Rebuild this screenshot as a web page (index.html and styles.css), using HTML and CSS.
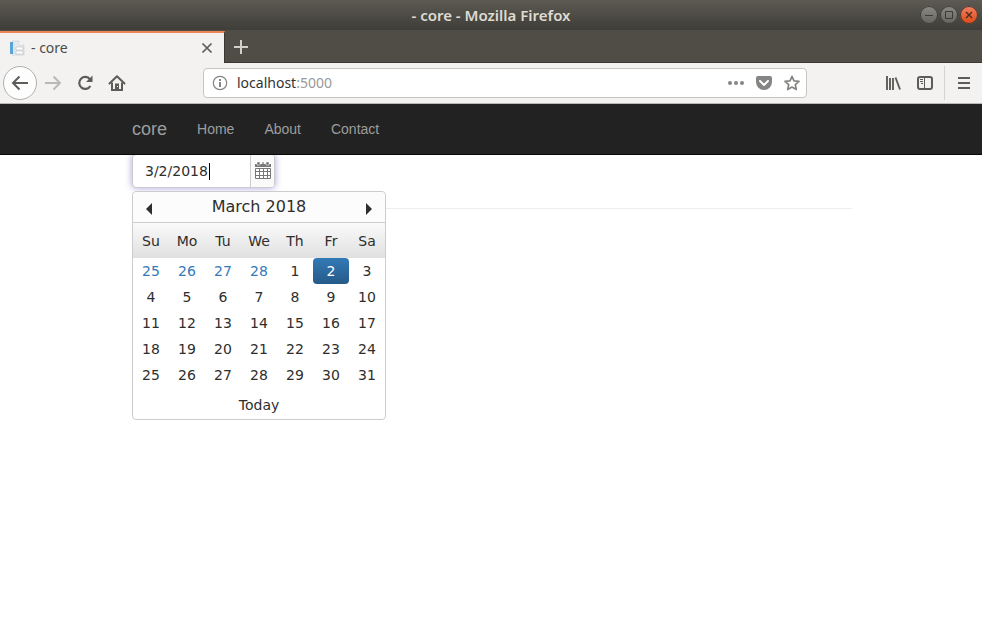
FILE: index.html
```html
<!DOCTYPE html>
<html lang="en">
<head>
<meta charset="utf-8">
<title>- core</title>
<link rel="stylesheet" href="styles.css">
</head>
<body>
<div class="titlebar">
  <h1 class="window-title">- core - Mozilla Firefox</h1>
  <div class="window-buttons">
    <button class="winbtn" aria-label="Minimize"><svg width="18" height="18" viewBox="0 0 18 18"><path d="M5 9.5h8" stroke="#3c3b37" fill="none"/></svg></button>
    <button class="winbtn" aria-label="Maximize"><svg width="18" height="18" viewBox="0 0 18 18"><path d="M5.5 5.5h7v7h-7z" stroke="#3c3b37" fill="none"/></svg></button>
    <button class="winbtn close" aria-label="Close"><svg width="18" height="18" viewBox="0 0 18 18"><path d="M6 6l6 6M12 6l-6 6" stroke="#4a2a1c" stroke-width="1.4" fill="none"/></svg></button>
  </div>
</div>
<div class="tabs">
  <div class="tab">
    <svg class="favicon" width="16" height="16" viewBox="0 0 16 16"><path d="M3 1h7l5 4v10H3z" fill="#e9e9ec" stroke="#c9cbd0" stroke-width=".6"/><path d="M1 2h3v12H1z" fill="#5aa5d2"/><path d="M4 1h2v14H4z" fill="#d8e6ef"/><path d="M10 1v4h5" fill="#fff" stroke="#c9cbd0" stroke-width=".6"/><path d="M7 7h7v3H7zM7 11h7v3H7z" fill="#fff" stroke="#b9bcc5" stroke-width=".6"/></svg>
    <span class="tab-title">- core</span>
    <button class="icon-btn" aria-label="Close tab"><svg width="12" height="12" viewBox="0 0 12 12"><path d="M1.5 1.5l9 9M10.5 1.5l-9 9" stroke="#5c5c59" stroke-width="1.7" fill="none"/></svg></button>
  </div>
  <button class="icon-btn new-tab" aria-label="New tab"><svg width="16" height="16" viewBox="0 0 16 16"><path d="M8 1v14M1 8h14" stroke="#d2cfc9" stroke-width="2" fill="none"/></svg></button>
</div>
<div class="toolbar">
  <div class="nav-tools">
    <button class="icon-btn back" aria-label="Back"><svg width="18" height="18" viewBox="0 0 18 18"><path d="M17 9H2.500M8.500 2.500L2 9l6.500 6.500" stroke="#5c5c59" stroke-width="2" fill="none"/></svg></button>
    <button class="icon-btn" aria-label="Forward"><svg width="18" height="18" viewBox="0 0 18 18"><path d="M1 9h14.500M9.500 2.500L16 9l-6.500 6.500" stroke="#b9b9b7" stroke-width="2" fill="none"/></svg></button>
    <button class="icon-btn" aria-label="Reload"><svg width="18" height="18" viewBox="0 0 18 18"><path d="M14 5.300A6 6 0 1 0 14.400 12" stroke="#5c5c59" stroke-width="2.200" fill="none"/><path d="M16.500 1.500v6.500H10z" fill="#5c5c59"/></svg></button>
    <button class="icon-btn" aria-label="Home"><svg width="18" height="18" viewBox="0 0 18 18"><path d="M1.500 9.500L9 2.300l7.500 7.200" stroke="#5c5c59" stroke-width="2" stroke-linecap="round" stroke-linejoin="round" fill="none"/><path d="M4 8.500V16h10V8.500" stroke="#5c5c59" stroke-width="2" fill="none"/><path d="M7 9.500h4V16H7z" fill="#5c5c59"/><path d="M9 12h1v1H9z" fill="#fff"/></svg></button>
  </div>
  <div class="urlbar">
    <svg width="16" height="16" viewBox="0 0 16 16"><circle cx="8" cy="8" r="6.700" stroke="#858583" stroke-width="1.200" fill="none"/><path d="M7 7h2v5H7zM7 4h2v2H7z" fill="#858583"/></svg>
    <span class="url">localhost<span class="port">:5000</span></span>
    <button class="icon-btn" aria-label="Page actions"><svg width="16" height="16" viewBox="0 0 16 16"><g fill="#858583"><circle cx="2" cy="8" r="2"/><circle cx="8" cy="8" r="2"/><circle cx="14" cy="8" r="2"/></g></svg></button>
    <button class="icon-btn" aria-label="Save to Pocket"><svg width="16" height="16" viewBox="0 0 16 16"><path d="M2 1h12a2 2 0 0 1 2 2v4a8 8 0 0 1-16 0V3a2 2 0 0 1 2-2z" fill="#858583"/><path d="M4 6l4 4 4-4" stroke="#fff" stroke-width="2" stroke-linecap="round" stroke-linejoin="round" fill="none"/></svg></button>
    <button class="icon-btn" aria-label="Bookmark"><svg width="16" height="16" viewBox="0 0 16 16"><path d="M8 1.300l2 4.500 5 .5-3.700 3.300 1 4.900L8 12l-4.300 2.500 1-4.900L1 6.300l5-.5z" stroke="#858583" stroke-width="1.700" stroke-linejoin="round" fill="none"/></svg></button>
  </div>
  <div class="side-tools">
    <button class="icon-btn" aria-label="Library"><svg width="16" height="16" viewBox="0 0 16 16"><path d="M2 1v14M5 3v12M8 3v12M10.500 2.500l4.500 12" stroke="#5c5c59" stroke-width="1.900" fill="none"/></svg></button>
    <button class="icon-btn" aria-label="Sidebars"><svg width="16" height="16" viewBox="0 0 16 16"><rect x="1" y="2" width="14" height="12" rx="2" stroke="#5c5c59" stroke-width="2" fill="none"/><path d="M7.500 2v12M3 4.500h3M3 6.500h3M4 8.500h2" stroke="#5c5c59" fill="none"/></svg></button>
    <button class="icon-btn menu" aria-label="Menu"><svg width="12" height="12" viewBox="0 0 12 12"><path d="M0 1h12M0 6h12M0 11h12" stroke="#5c5c59" stroke-width="2" fill="none"/></svg></button>
  </div>
</div>
<nav class="navbar">
  <div class="container nav-links">
    <a class="brand" href="#">core</a>
    <a href="#">Home</a>
    <a href="#">About</a>
    <a href="#">Contact</a>
  </div>
</nav>
<main class="page">
  <div class="container">
    <div class="picker">
      <div class="field">
        <input type="text" value="3/2/2018" aria-label="Date">
        <span class="caret"></span>
        <button class="open" aria-label="Open calendar"><svg width="16" height="18" viewBox="0 0 16 18"><path d="M0 2h16v3H0z" fill="#777"/><path d="M2 0h3v3H2zM11 0h3v3h-3z" fill="#666" stroke="#fafafa" stroke-width=".6"/><path d="M7 0h2v2H7z" fill="#aaa"/><path d="M.5 6.500h15v10H.5zM.5 9.500h15M.5 13.500h15M4.500 7v10M8.500 7v10M12.500 7v10" stroke="#777" fill="#fff"/></svg></button>
      </div>
      <div class="calendar">
        <div class="cal-head">
          <button aria-label="Previous month"><svg width="6" height="12" viewBox="0 0 6 12"><path d="M6 0v12L0 6z" fill="#2e2e2e"/></svg></button>
          <button class="month">March 2018</button>
          <button aria-label="Next month"><svg width="6" height="12" viewBox="0 0 6 12"><path d="M0 0v12l6-6z" fill="#2e2e2e"/></svg></button>
        </div>
        <table>
          <thead><tr><th>Su</th><th>Mo</th><th>Tu</th><th>We</th><th>Th</th><th>Fr</th><th>Sa</th></tr></thead>
          <tbody>
            <tr><td class="other">25</td><td class="other">26</td><td class="other">27</td><td class="other">28</td><td>1</td><td class="selected">2</td><td>3</td></tr>
            <tr><td>4</td><td>5</td><td>6</td><td>7</td><td>8</td><td>9</td><td>10</td></tr>
            <tr><td>11</td><td>12</td><td>13</td><td>14</td><td>15</td><td>16</td><td>17</td></tr>
            <tr><td>18</td><td>19</td><td>20</td><td>21</td><td>22</td><td>23</td><td>24</td></tr>
            <tr><td>25</td><td>26</td><td>27</td><td>28</td><td>29</td><td>30</td><td>31</td></tr>
          </tbody>
        </table>
        <button class="today">Today</button>
      </div>
    </div>
    <hr>
  </div>
</main>
</body>
</html>
```
FILE: styles.css
```css
* { box-sizing: border-box; }
body {
  margin: 0;
  min-height: 100vh;
  background: #fff;
  color: #2e2e2e;
  font: 14px/20px "DejaVu Sans", sans-serif;
}
button {
  margin: 0;
  padding: 0;
  border: 0;
  background: none;
  color: inherit;
  font: inherit;
}
svg { display: block; flex: none; }

.titlebar {
  display: grid;
  grid-template-columns: 1fr auto 1fr;
  align-items: center;
  height: 30px;
  padding: 0 4px;
  background: linear-gradient(#5c5a52, #3e3d38);
}
.window-title {
  grid-column: 2;
  margin: 0;
  color: #dfdbd2;
  font: 600 15px/20px "Noto Sans", sans-serif;
}
.window-buttons { display: flex; justify-content: flex-end; gap: 2px; }
.winbtn {
  width: 18px;
  height: 18px;
  border-radius: 50%;
  background: linear-gradient(#8b8a84, #64635d);
  box-shadow: inset 0 0 0 1px #3c3b37;
}
.winbtn.close { background: linear-gradient(#f58063, #dd4814); }

.icon-btn { display: flex; align-items: center; justify-content: center; }
.tabs {
  display: flex;
  height: 33px;
  background: linear-gradient(90deg, #f3f2f1 224px, #3a3833 224px) bottom / 100% 1px no-repeat #504d46;
}
.tab {
  display: flex;
  align-items: center;
  gap: 6px;
  width: 225px;
  height: 32px;
  padding: 0 11px 0 9px;
  background: #f3f2f1;
  border-top: 2px solid #ee8458;
  border-right: 1px solid #3a3833;
  margin-top: 1px;
}
.tab-title {
  flex: 1;
  color: #4c4c4c;
  font: 14px/20px "Noto Sans", sans-serif;
}
.new-tab { width: 32px; }

.toolbar {
  display: flex;
  align-items: center;
  height: 41px;
  padding: 0 12px 0 3px;
  background: #f3f2f1;
  border-bottom: 1px solid #b9b8b5;
}
.nav-tools { display: flex; align-items: center; gap: 14px; margin-right: 77px; }
.nav-tools .back {
  width: 34px;
  height: 34px;
  margin-right: -7px;
  background: #fdfdfd;
  border: 1px solid #b0b0ae;
  border-radius: 50%;
}
.urlbar {
  display: flex;
  flex: 1;
  align-items: center;
  gap: 12px;
  height: 30px;
  padding: 0 6px 0 8px;
  background: #fff;
  border: 1px solid #c6c5c3;
  border-radius: 4px;
}
.url {
  flex: 1;
  margin-left: -3px;
  color: #333;
  font: 14px/20px "Noto Sans", sans-serif;
}
.port { color: #999; }
.side-tools { display: flex; align-items: center; gap: 16px; margin-left: 78px; }
.side-tools .menu {
  height: 34px;
  margin-left: -5px;
  padding-left: 13px;
  border-left: 1px solid #d4d3d1;
}

.navbar {
  position: relative;
  z-index: 1;
  padding-left: 2px;
  background: #222;
  border-bottom: 1px solid #080808;
}
.container { max-width: 720px; margin: 0 auto; }
.nav-links { display: flex; align-items: center; gap: 30px; height: 50px; }
.nav-links a {
  color: #9d9d9d;
  font: 14px/20px "Liberation Sans", sans-serif;
  text-decoration: none;
}
.nav-links .brand { font-size: 18px; }

.page { padding-left: 2px; }
.picker { position: relative; display: flex; }
.field {
  position: relative;
  display: flex;
  width: 143px;
  height: 34px;
  margin-top: -1px;
  background: #fff;
  border: 1px solid #ccc;
  border-radius: 4px;
  box-shadow: 0 0 7px #a9a0e0;
}
.field input {
  width: 117px;
  padding: 0 12px;
  border: 0;
  outline: 0;
  background: none;
  color: #2e2e2e;
  font: inherit;
}
.caret {
  position: absolute;
  top: 8px;
  left: 76px;
  width: 1px;
  height: 17px;
  background: #000;
}
.open {
  display: flex;
  flex: 1;
  align-items: center;
  justify-content: center;
  background: #fafafa;
  border-left: 1px solid #ccc;
  border-radius: 0 3px 3px 0;
}
hr { margin: 20px 0; border: 0; border-top: 1px solid #eee; }

.calendar {
  position: absolute;
  top: 36px;
  left: 0;
  width: 254px;
  background: #fff;
  border: 1px solid #ccc;
  border-radius: 4px;
}
.cal-head {
  display: flex;
  align-items: center;
  height: 31px;
  background: #fcfcfc;
  border-bottom: 1px solid #ccc;
  border-radius: 4px 4px 0 0;
}
.cal-head button { display: flex; justify-content: center; width: 32px; padding-top: 3px; }
.cal-head .month { flex: 1; padding: 0; font-size: 16px; }
.calendar table { width: 100%; border-collapse: collapse; table-layout: fixed; }
.calendar th {
  height: 35px;
  padding: 0;
  font-weight: 400;
}
.calendar thead { background: linear-gradient(#fafafa, #e0e0e0); }
.calendar td { height: 26px; padding: 0; text-align: center; }
.calendar .other { color: #337ab7; }
.calendar .selected {
  background: linear-gradient(#337ab7, #265a88);
  border-radius: 4px;
  color: #fff;
}
.today { display: block; width: 100%; height: 31px; padding-top: 3px; }
```
